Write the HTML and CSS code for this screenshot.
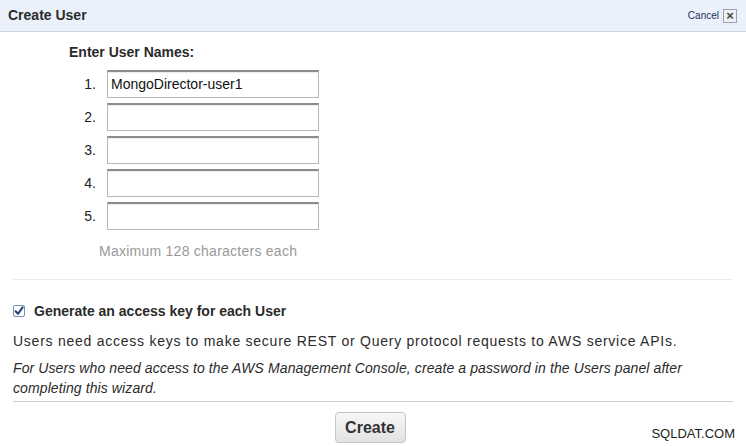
FILE: index.html
```html
<!DOCTYPE html>
<html>
<head>
<meta charset="utf-8">
<link rel="stylesheet" href="styles.css">
</head>
<body>
<div class="dialog">
  <div class="header">
    <span class="title">Create User</span>
    <span class="cancel">Cancel <span class="xbox">×</span></span>
  </div>
  <div class="names">
    <div class="names-title">Enter User Names:</div>
    <div class="row"><span class="num">1.</span><div class="input">MongoDirector-user1</div></div>
    <div class="row"><span class="num">2.</span><div class="input"></div></div>
    <div class="row"><span class="num">3.</span><div class="input"></div></div>
    <div class="row"><span class="num">4.</span><div class="input"></div></div>
    <div class="row"><span class="num">5.</span><div class="input"></div></div>
    <div class="hint">Maximum 128 characters each</div>
  </div>
  <div class="section">
    <div class="check-row">
      <svg class="checkbox" width="12" height="12" viewBox="0 0 12 12">
        <rect x="0.5" y="0.5" width="11" height="11" rx="1.5" fill="#fff" stroke="#7a8ea8"/>
        <path d="M2.6 6.2 L5 8.8 L9.6 2.4" fill="none" stroke="#1d3f78" stroke-width="2" stroke-linecap="round" stroke-linejoin="round"/>
      </svg>
      <span class="check-label">Generate an access key for each User</span>
    </div>
    <p class="desc">Users need access keys to make secure REST or Query protocol requests to AWS service APIs.</p>
    <p class="note">For Users who need access to the AWS Management Console, create a password in the Users panel after completing this wizard.</p>
  </div>
  <div class="footer">
    <button class="create">Create</button>
    <span class="watermark">SQLDAT.COM</span>
  </div>
</div>
</body>
</html>
```

FILE: styles.css
```css
html, body {
  margin: 0;
  padding: 0;
  background: #fff;
}
body {
  font-family: "Liberation Sans", Arial, Helvetica, sans-serif;
  color: #222;
  width: 746px;
  height: 446px;
  overflow: hidden;
}
.dialog {
  display: flex;
  flex-direction: column;
}
.header {
  height: 31px;
  background: #eaf1fb;
  border-bottom: 1px solid #cad6e6;
  display: flex;
  align-items: center;
  justify-content: space-between;
  padding: 0 9px 0 8px;
}
.title {
  font-weight: bold;
  font-size: 14px;
  color: #2b2b2b;
  margin-top: -1px;
}
.cancel {
  font-size: 10px;
  color: #1a2c5a;
  display: flex;
  align-items: center;
  gap: 4px;
}
.xbox {
  width: 12px;
  height: 12px;
  border: 1px solid #9aa3ad;
  background: #eef0f2;
  color: #444;
  font-size: 13px;
  line-height: 12px;
  text-align: center;
  font-weight: bold;
}
.names {
  padding: 10px 0 0 69px;
  display: flex;
  flex-direction: column;
}
.names-title {
  font-weight: bold;
  font-size: 14px;
  color: #2b2b2b;
  height: 20px;
  line-height: 20px;
  margin-bottom: 8px;
}
.row {
  display: flex;
  align-items: center;
  margin-bottom: 5px;
}
.num {
  width: 27px;
  text-align: right;
  font-size: 14px;
  color: #222;
  margin-right: 11px;
}
.input {
  box-sizing: border-box;
  width: 212px;
  height: 28px;
  border: 1px solid #b8b8b8;
  border-top-color: #8c8c8c;
  border-top-width: 2px;
  box-shadow: inset 0 1px 1px rgba(0,0,0,0.08);
  font-size: 14px;
  line-height: 24px;
  padding-left: 3px;
  color: #111;
}
.hint {
  margin: 6px 0 0 30px;
  font-size: 14px;
  letter-spacing: 0.25px;
  color: #999;
  height: 20px;
  line-height: 20px;
}
.section {
  margin: 18px 13px 0 13px;
  border-top: 1px solid #ececec;
  border-bottom: 1px solid #cfcfcf;
  padding-top: 21px;
  padding-bottom: 3px;
}
.check-row {
  display: flex;
  align-items: center;
  height: 20px;
}
.checkbox {
  margin-right: 9px;
}
.check-label {
  font-weight: bold;
  font-size: 14px;
  color: #2b2b2b;
}
.desc {
  margin: 10px 0 0 0;
  font-size: 14px;
  letter-spacing: 0.75px;
  line-height: 20px;
  color: #2b2b2b;
}
.note {
  margin: 7px 0 0 0;
  font-size: 14px;
  letter-spacing: 0.1px;
  line-height: 20px;
  font-style: italic;
  color: #2b2b2b;
}
.footer {
  position: relative;
  height: 43px;
  display: flex;
  justify-content: center;
  align-items: flex-start;
  padding-top: 10px;
  box-sizing: border-box;
}
.create {
  width: 71px;
  height: 31px;
  margin-left: -6px;
  border: 1px solid #c4c4c4;
  border-radius: 4px;
  background: linear-gradient(#f7f7f7, #e2e2e2);
  font-family: "Liberation Sans", Arial, sans-serif;
  font-weight: bold;
  font-size: 16px;
  color: #333;
  padding: 0;
}
.watermark {
  position: absolute;
  right: 11px;
  top: 25px;
  font-size: 13px;
  line-height: 14px;
  color: #222;
}
```
